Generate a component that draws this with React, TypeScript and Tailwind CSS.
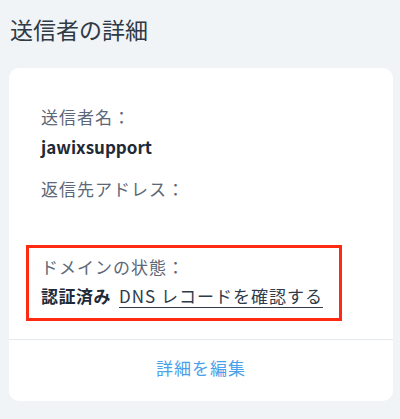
export default function App() {
  return (
    <div
      className="min-h-[419px] w-[400px] bg-[#f0f4f7] pt-[13px] pb-[16px]"
      style={{ fontFamily: '"Noto Sans CJK JP", "Noto Sans", sans-serif' }}
    >
      <h1 className="pl-[10px] text-[23px] leading-[32px] text-[#2f3a45]">送信者の詳細</h1>

      <div className="mt-[23px] ml-[9px] w-[384px] rounded-[10px] bg-white">
        <div className="pt-[37px] pb-[18px]">
          <div className="pl-[32px]">
            <p className="text-[17px] leading-[24px] tracking-[1px] text-[#5c6878]">送信者名：</p>
            <p className="mt-[6px] text-[17px] leading-[24px] font-bold text-[#1f2a37]">jawixsupport</p>
            <p className="mt-[18px] text-[17px] leading-[24px] tracking-[1px] text-[#5c6878]">返信先アドレス：</p>
          </div>

          <div className="mt-[44px] ml-[17px] w-[316px] border-[3px] border-[#ff2a12] pt-[7px] pb-[10px] pl-[12px]">
            <p className="text-[17px] leading-[24px] tracking-[1px] text-[#5c6878]">ドメインの状態：</p>
            <p className="mt-[5px] flex items-center gap-[8px] text-[17px] leading-[24px]">
              <span className="font-bold tracking-[0.5px] text-[#1f2a37]">認証済み</span>
              <a href="#" className="tracking-[1px] text-[#2f3b4a] underline decoration-1 underline-offset-[4px]">
                DNS レコードを確認する
              </a>
            </p>
          </div>
        </div>

        <div className="h-px bg-[#e4e9ee]" />

        <div className="flex h-[61px] items-center justify-center pb-[6px]">
          <button className="text-[17px] leading-[24px] tracking-[1px] text-[#4aa0ea]">詳細を編集</button>
        </div>
      </div>
    </div>
  );
}
